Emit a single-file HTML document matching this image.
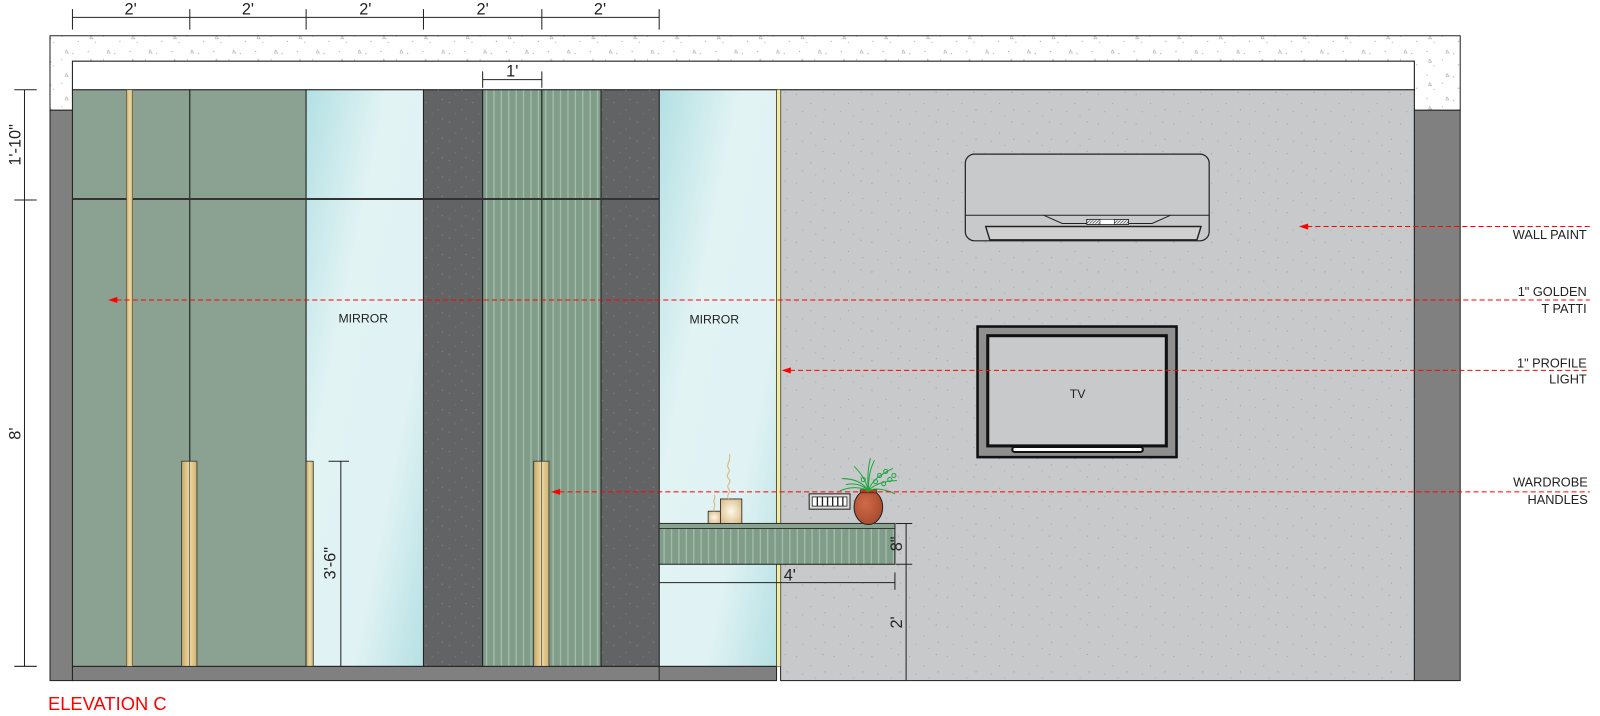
<!DOCTYPE html>
<html><head><meta charset="utf-8"><style>
html,body{margin:0;padding:0;background:#fff;}
svg{display:block;}
text{font-family:"Liberation Sans",Arial,sans-serif;}
</style></head><body>
<svg width="1600" height="716" viewBox="0 0 1568 701.7" preserveAspectRatio="none" xmlns="http://www.w3.org/2000/svg">
<defs>
<linearGradient id="mir" x1="0" y1="0" x2="1" y2="1">
<stop offset="0" stop-color="#b3e0e3"/><stop offset="0.35" stop-color="#e2f3f4"/><stop offset="0.7" stop-color="#e0f2f3"/><stop offset="1" stop-color="#b5e0e3"/>
</linearGradient>
<linearGradient id="gold" x1="0" x2="1">
<stop offset="0" stop-color="#c9a860"/><stop offset="0.5" stop-color="#ecd9a6"/><stop offset="1" stop-color="#cfb170"/>
</linearGradient>
<radialGradient id="cand" cx="0.5" cy="0.5" r="0.6"><stop offset="0" stop-color="#fff8ea"/><stop offset="1" stop-color="#dcbf8c"/></radialGradient>
<radialGradient id="vase" cx="0.4" cy="0.4" r="0.7"><stop offset="0" stop-color="#d06a48"/><stop offset="1" stop-color="#a2482c"/></radialGradient>
<pattern id="flute" width="7.25" height="10" patternUnits="userSpaceOnUse">
<rect width="7.25" height="10" fill="#7f9d88"/><rect x="5" width="1.2" height="10" fill="#a9bfae"/>
</pattern>
<pattern id="spk" width="37" height="29" patternUnits="userSpaceOnUse">
<rect x="3" y="5" width="1" height="1" fill="#9a9a9a"/><rect x="17" y="14" width="1" height="1" fill="#a0a0a0"/><rect x="29" y="3" width="1" height="1" fill="#9a9a9a"/><rect x="9" y="22" width="1" height="1" fill="#a5a5a5"/><rect x="31" y="20" width="1" height="1" fill="#9a9a9a"/><rect x="22" y="26" width="1" height="1" fill="#aaa"/>
</pattern>
<pattern id="spkd" width="23" height="19" patternUnits="userSpaceOnUse">
<rect x="3" y="5" width="1" height="1" fill="#8a8a8a"/><rect x="15" y="12" width="1" height="1" fill="#858585"/><rect x="9" y="16" width="1" height="1" fill="#7c7c7c"/><rect x="19" y="2" width="1" height="1" fill="#8a8a8a"/>
</pattern>
<pattern id="conc" width="41" height="23" patternUnits="userSpaceOnUse">
<rect width="41" height="23" fill="#fff"/>
<rect x="4" y="4" width="1" height="1" fill="#999"/><rect x="19" y="12" width="1" height="1" fill="#aaa"/><rect x="30" y="6" width="1" height="1" fill="#999"/><rect x="11" y="18" width="1" height="1" fill="#aaa"/><rect x="35" y="17" width="1" height="1" fill="#999"/>
<path d="M24 3l2 3h-3z" fill="none" stroke="#aaa" stroke-width="0.6"/><path d="M7 12l2 3h-3z" fill="none" stroke="#aaa" stroke-width="0.6"/>
</pattern>
<pattern id="hatch" width="3" height="3" patternUnits="userSpaceOnUse"><rect width="3" height="3" fill="#fff"/><path d="M0 3L3 0" stroke="#333" stroke-width="0.7"/></pattern>
</defs>

<path d="M49 35H1431V108H1386V60H71V108H49Z" fill="url(#conc)" stroke="#222" stroke-width="1"/>
<rect x="71" y="60" width="1315" height="28" fill="#fff" stroke="#222" stroke-width="1"/>
<rect x="49" y="108" width="22" height="559" fill="#808080" stroke="#222"/>
<rect x="1386" y="108" width="45" height="559" fill="#808080" stroke="#222"/>
<rect x="765" y="88" width="621" height="579" fill="#c8c9cb" stroke="#222"/>
<rect x="765" y="88" width="621" height="579" fill="url(#spk)"/>
<rect x="71" y="653" width="690" height="14" fill="#808080" stroke="#222"/>
<line x1="646" y1="653" x2="646" y2="667" stroke="#222"/>

<rect x="71" y="88" width="229" height="565" fill="#8ba293" stroke="#222"/>
<line x1="186" y1="88" x2="186" y2="653" stroke="#111"/>
<rect x="300" y="88" width="115" height="565" fill="url(#mir)" stroke="#222"/>
<rect x="646" y="88" width="115" height="565" fill="url(#mir)" stroke="#222"/>
<rect x="415" y="88" width="58" height="565" fill="#626365" stroke="#222"/>
<rect x="415" y="88" width="58" height="565" fill="url(#spkd)"/>
<rect x="589" y="88" width="57" height="565" fill="#626365" stroke="#222"/>
<rect x="589" y="88" width="57" height="565" fill="url(#spkd)"/>
<rect x="473" y="88" width="116" height="565" fill="url(#flute)" stroke="#222"/>
<line x1="531" y1="88" x2="531" y2="653" stroke="#111"/>
<line x1="71" y1="195" x2="646" y2="195" stroke="#333" stroke-width="2"/>
<rect x="124" y="88" width="6" height="565" fill="url(#gold)" stroke="#444" stroke-width="0.6"/>
<rect x="761" y="88" width="4" height="565" fill="#f1ec9f" stroke="#444" stroke-width="0.6"/>
<rect x="178" y="452" width="15" height="201" fill="url(#gold)" stroke="#333" stroke-width="0.8"/>
<line x1="185.5" y1="452" x2="185.5" y2="653" stroke="#333" stroke-width="0.6"/>
<rect x="300" y="452" width="7" height="201" fill="url(#gold)" stroke="#333" stroke-width="0.8"/>
<rect x="523" y="452" width="15" height="201" fill="url(#gold)" stroke="#333" stroke-width="0.8"/>
<line x1="530.5" y1="452" x2="530.5" y2="653" stroke="#333" stroke-width="0.6"/>

<text x="356" y="316" font-size="12" text-anchor="middle" fill="#222">MIRROR</text>
<text x="700" y="317" font-size="12" text-anchor="middle" fill="#222">MIRROR</text>

<rect x="646" y="513" width="231" height="40" fill="url(#flute)" stroke="#222"/>
<rect x="646" y="513" width="231" height="5" fill="#8aa391" stroke="#222" stroke-width="0.8"/>
<rect x="694" y="501" width="12" height="12" fill="url(#cand)" stroke="#222" stroke-width="0.8"/>
<rect x="706" y="489" width="21" height="24" fill="url(#cand)" stroke="#222" stroke-width="0.8"/>
<path d="M714 489c-3-4 3-6 0-10s4-6 0-10 3-6 0-10 2-4 1-14" fill="none" stroke="#d8be8c" stroke-width="1.2"/>
<path d="M700 501c-2-3 2-5 0-8s2-4 0-8" fill="none" stroke="#d8be8c" stroke-width="1.2"/>
<rect x="793" y="484" width="40" height="15" fill="#ddd" stroke="#222"/>
<rect x="796" y="487" width="34" height="9" fill="#fff" stroke="#222" stroke-width="0.8"/>
<path d="M801 487v9M806 487v9M811 487v9M816 487v9M821 487v9M826 487v9" stroke="#222" stroke-width="1.3"/>
<ellipse cx="851" cy="497" rx="14" ry="17" fill="url(#vase)" stroke="#222"/>
<rect x="843" y="480" width="16" height="3" fill="#b4502e" stroke="#222" stroke-width="0.6"/>
<g stroke="#1ea63c" stroke-width="1" fill="none">
<path d="M851 481c-5-8-14-12-26-12M851 481c-3-12-8-18-14-24M851 481c0-14 2-22 6-30M851 481c3-10 12-16 24-22M851 481c5-6 16-10 28-10M851 481c6-3 16-2 26 3M851 481c-8-4-18-4-28 0M851 481c-1-10-1-20 2-32M851 481c-6-6-14-8-22-6"/>
<circle cx="862" cy="466" r="2"/><circle cx="868" cy="462" r="2"/><circle cx="858" cy="472" r="2"/><circle cx="872" cy="470" r="2"/><circle cx="846" cy="470" r="2"/><circle cx="866" cy="474" r="2"/><circle cx="876" cy="466" r="2"/>
</g>

<rect x="946" y="151" width="239" height="85" rx="9" fill="#c8c9cb" stroke="#222" stroke-width="1.2"/>
<line x1="946" y1="211" x2="1185" y2="211" stroke="#222"/>
<path d="M1023 211l18 8h88l18-8" fill="none" stroke="#222"/>
<rect x="1065" y="215" width="41" height="5" fill="url(#hatch)" stroke="#222" stroke-width="0.8"/>
<rect x="1078" y="215" width="14" height="5" fill="#fff" stroke="#222" stroke-width="0.6"/>
<path d="M966 222h211l-4 13H970z" fill="#d0d0d0" stroke="#222" stroke-width="1.4"/>

<rect x="958" y="320" width="195" height="128" fill="#8f8f90" stroke="#111" stroke-width="2.5"/>
<rect x="968" y="329" width="175" height="108" fill="#c8c9cb" stroke="#111" stroke-width="3"/>
<rect x="992" y="438" width="128" height="5" rx="2.5" fill="#fff" stroke="#111" stroke-width="2"/>
<text x="1056" y="390" font-size="12" text-anchor="middle" fill="#222">TV</text>

<g stroke="#222" stroke-width="1">
<line x1="71" y1="17" x2="646" y2="17"/>
<path d="M71 9v20M186 9v20M300 9v20M415 9v20M531 9v20M646 9v20"/>
<line x1="473" y1="78" x2="531" y2="78"/><path d="M473 70v16M531 70v16"/>
<line x1="24" y1="88" x2="24" y2="653"/><path d="M14 88h22M14 196h22M14 653h22"/>
<line x1="334" y1="452" x2="334" y2="653"/><path d="M322 452h20"/>
<line x1="888" y1="513" x2="888" y2="667"/><path d="M878 513h16M878 553h16"/>
<line x1="646" y1="571" x2="877" y2="571"/><path d="M877 561v17"/>
</g>
<g fill="#222" font-size="16" text-anchor="middle">
<text x="128" y="14">2'</text><text x="243" y="14">2'</text><text x="358" y="14">2'</text><text x="473" y="14">2'</text><text x="588" y="14">2'</text>
<text x="502" y="75">1'</text>
<text x="774" y="569">4'</text>
<text transform="translate(20,142) rotate(-90)">1'-10"</text>
<text transform="translate(20,425) rotate(-90)">8'</text>
<text transform="translate(329,552) rotate(-90)">3'-6"</text>
<text transform="translate(884,533) rotate(-90)">8"</text>
<text transform="translate(884,610) rotate(-90)">2'</text>
</g>

<g stroke="#f00" stroke-width="1" stroke-dasharray="5,3" fill="none">
<line x1="1281" y1="222" x2="1558" y2="222"/>
<line x1="114" y1="294" x2="1558" y2="294"/>
<line x1="774" y1="363" x2="1558" y2="363"/>
<line x1="548" y1="482" x2="1558" y2="482"/>
</g>
<g fill="#f00">
<path d="M1273 222l9-3v6z"/><path d="M106 294l9-3v6z"/><path d="M766 363l9-3v6z"/><path d="M540 482l9-3v6z"/>
</g>
<g fill="#222" font-size="12.5" text-anchor="end">
<text x="1555" y="234">WALL PAINT</text>
<text x="1555" y="290">1" GOLDEN</text><text x="1555" y="307">T PATTI</text>
<text x="1555" y="360">1" PROFILE</text><text x="1555" y="376">LIGHT</text>
<text x="1556" y="477">WARDROBE</text><text x="1556" y="494">HANDLES</text>
</g>
<text x="47" y="696" font-size="18" fill="#f00">ELEVATION C</text>
</svg>
</body></html>
